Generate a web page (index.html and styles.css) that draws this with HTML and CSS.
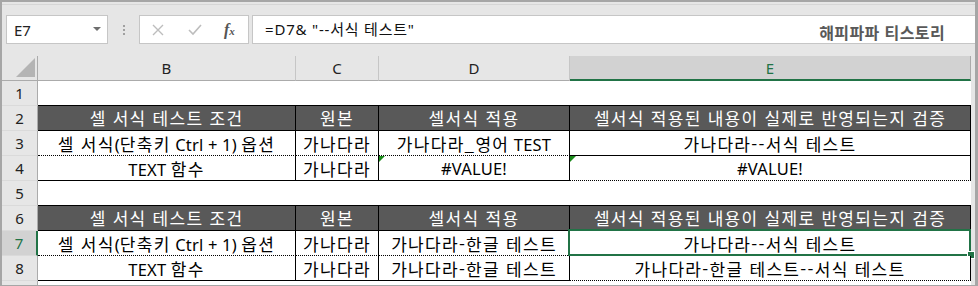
FILE: index.html
```html
<!DOCTYPE html>
<html lang="ko">
<head>
<meta charset="utf-8">
<link rel="stylesheet" href="styles.css">
</head>
<body>
<div class="app">
  <div class="fbar">
    <div class="namebox"><span class="nb-text">E7</span><span class="dd"></span></div>
    <div class="dots"><i></i><i></i><i></i></div>
    <div class="fxbox">
      <svg class="ic" width="12" height="12" viewBox="0 0 12 12"><path d="M1 1 L11 11 M11 1 L1 11" stroke="#bdbdbd" stroke-width="1.4" fill="none"/></svg>
      <svg class="ic" width="14" height="12" viewBox="0 0 14 12"><path d="M1 6 L5 10 L13 1" stroke="#bdbdbd" stroke-width="1.6" fill="none"/></svg>
      <span class="fx">f<small>x</small></span>
    </div>
    <div class="finput"><span class="ftext">=D7&amp; "--서식 테스트"</span><span class="wm">해피파파 티스토리</span></div>
  </div>
  <div class="sheet">
    <!-- header row -->
    <div class="corner"><span class="tri"></span></div>
    <div class="ch">B</div>
    <div class="ch">C</div>
    <div class="ch">D</div>
    <div class="ch sel">E</div>
    <div class="gap"></div>
    <!-- row 1 -->
    <div class="rh">1</div>
    <div class="c tb"></div><div class="c tb"></div><div class="c tb"></div><div class="c tb"></div><div class="gap"></div>
    <!-- row 2 -->
    <div class="rh">2</div>
    <div class="c hd">셀 서식 테스트 조건</div>
    <div class="c hd">원본</div>
    <div class="c hd">셀서식 적용</div>
    <div class="c hd">셀서식 적용된 내용이 실제로 반영되는지 검증</div>
    <div class="gap"></div>
    <!-- row 3 -->
    <div class="rh">3</div>
    <div class="c bd dot"><span>셀 서식<span class="en">(</span>단축키<span class="en"> Ctrl + 1) </span>옵션</span></div>
    <div class="c bd dot">가나다라</div>
    <div class="c bd dot"><span>가나다라_영어<span class="en"> TEST</span></span></div>
    <div class="c bd">가나다라--서식 테스트</div>
    <div class="gap"></div>
    <!-- row 4 -->
    <div class="rh">4</div>
    <div class="c bd"><span><span class="en">TEXT </span>함수</span></div>
    <div class="c bd">가나다라</div>
    <div class="c bd err"><span class="en">#VALUE!</span></div>
    <div class="c bd dot err"><span class="en">#VALUE!</span></div>
    <div class="gap"></div>
    <!-- row 5 -->
    <div class="rh">5</div>
    <div class="c tb"></div><div class="c tb"></div><div class="c tb"></div><div class="c tb"></div><div class="gap"></div>
    <!-- row 6 -->
    <div class="rh">6</div>
    <div class="c hd">셀 서식 테스트 조건</div>
    <div class="c hd">원본</div>
    <div class="c hd">셀서식 적용</div>
    <div class="c hd">셀서식 적용된 내용이 실제로 반영되는지 검증</div>
    <div class="gap"></div>
    <!-- row 7 -->
    <div class="rh sel">7</div>
    <div class="c bd dot"><span>셀 서식<span class="en">(</span>단축키<span class="en"> Ctrl + 1) </span>옵션</span></div>
    <div class="c bd dot">가나다라</div>
    <div class="c bd dot">가나다라-한글 테스트</div>
    <div class="c bd active">가나다라--서식 테스트<span class="selbox"></span><span class="handle"></span></div>
    <div class="gap"></div>
    <!-- row 8 -->
    <div class="rh">8</div>
    <div class="c bd"><span><span class="en">TEXT </span>함수</span></div>
    <div class="c bd">가나다라</div>
    <div class="c bd">가나다라-한글 테스트</div>
    <div class="c bd dot">가나다라-한글 테스트--서식 테스트</div>
    <div class="gap"></div>
    <!-- partial row 9 -->
    <div class="rh part"></div>
    <div class="c part"></div><div class="c part"></div><div class="c part"></div><div class="c part"></div><div class="gap part"></div>
  </div>
</div>
</body>
</html>
```

FILE: styles.css
```css
* { box-sizing: border-box; }
html, body { margin: 0; padding: 0; }
body { width: 978px; height: 286px; overflow: hidden; background: #a6a6a6; }

.app {
  width: 978px;
  height: 286px;
  border-top: 2px solid #a6a6a6;
  border-left: 2px solid #a6a6a6;
  border-right: 3px solid #a6a6a6;
  border-bottom: 3px solid #a6a6a6;
  background: #e6e6e6;
  font-family: "Noto Sans", "Noto Sans CJK KR", sans-serif;
}

/* formula bar */
.fbar {
  height: 52px;
  margin-top: 2px;
  border-top: 1px solid #d6d6d6;
  padding: 10px 0 0 4px;
  display: flex;
  align-items: flex-start;
}
.namebox {
  width: 102px;
  height: 29px;
  background: #fff;
  border: 1px solid #c6c6c6;
  display: flex;
  align-items: center;
  justify-content: space-between;
  padding: 0 6px 0 7px;
}
.nb-text { font-size: 15px; color: #222; }
.dd {
  width: 0; height: 0;
  border-left: 4px solid transparent;
  border-right: 4px solid transparent;
  border-top: 4px solid #6e6e6e;
  margin-top: -2px;
}
.dots {
  width: 31px;
  height: 29px;
  display: flex;
  flex-direction: column;
  align-items: center;
  justify-content: center;
  gap: 2px;
}
.dots i { display: block; width: 2px; height: 2px; background: #a0a0a0; }
.fxbox {
  width: 110px;
  height: 29px;
  background: #fff;
  border: 1px solid #c6c6c6;
  display: flex;
  align-items: center;
  padding-left: 12px;
}
.fxbox .ic:first-child { margin-right: 24px; margin-top: 1px; }
.fxbox .ic:nth-child(2) { margin-right: 22px; }
.fx {
  font-family: "Liberation Serif", serif;
  font-style: italic;
  font-size: 16px;
  color: #555;
  font-weight: bold;
}
.fx small { font-size: 11px; }
.finput {
  flex: 1;
  height: 29px;
  margin-left: 3px;
  background: #fff;
  border: 1px solid #c6c6c6;
  border-right: none;
  display: flex;
  align-items: center;
  justify-content: space-between;
  padding: 0 30px 0 12px;
}
.ftext { font-size: 15px; color: #111; margin-top: -3px; letter-spacing: 0.8px; }
.wm {
  font-family: "Noto Sans CJK KR", sans-serif;
  font-weight: bold;
  font-size: 16px;
  letter-spacing: 0.4px;
  color: #595959;
  margin-top: 4px;
}

/* sheet */
.sheet {
  display: grid;
  grid-template-columns: 36px 258px 83px 191px 401px 4px;
  grid-template-rows: repeat(9, 25px) 4px;
  background: #fff;
}
.corner {
  background: #e6e6e6;
  border-right: 1px solid #ababab;
  border-bottom: 1px solid #ababab;
  position: relative;
}
.tri {
  position: absolute;
  right: 2px;
  bottom: 3px;
  width: 0; height: 0;
  border-left: 19px solid transparent;
  border-bottom: 19px solid #b4b4b4;
}
.ch {
  background: #e6e6e6;
  border-right: 1px solid #c6c6c6;
  border-bottom: 1px solid #ababab;
  display: flex;
  align-items: center;
  justify-content: center;
  font-size: 15px;
  color: #222;
}
.ch.sel {
  background: #d2d2d2;
  color: #217346;
  border-right: 1px solid #ababab;
  border-bottom: 2px solid #217346;
}
.gap { background: #e6e6e6; }
.rh {
  background: #e6e6e6;
  border-right: 1px solid #ababab;
  border-bottom: 1px solid #dadada;
  display: flex;
  align-items: center;
  justify-content: center;
  font-size: 15px;
  color: #222;
}
.rh.sel {
  background: #d2d2d2;
  color: #217346;
  border-right: 2px solid #217346;
}
.rh.part { border-bottom: none; }

.c {
  background: #fff;
  display: flex;
  align-items: center;
  justify-content: center;
  font-family: "Noto Sans CJK KR", sans-serif;
  font-size: 17px;
  letter-spacing: 1.3px;
  color: #000;
  white-space: nowrap;
  position: relative;
}
.c .en {
  font-family: "Noto Sans", "Noto Sans CJK KR", sans-serif;
  font-size: 16.5px;
  letter-spacing: 0.2px;
}
.c.tb { border-bottom: 1px solid #000; }
.c.hd {
  background: #595959;
  color: #fff;
  border-right: 1px solid #000;
  border-bottom: 1px solid #000;
  padding-bottom: 2px;
}
.c.bd {
  border-right: 1px solid #000;
  border-bottom: 1px solid #000;
}
.c.bd.dot { border-bottom: 1px dotted #000; }
.c.err::before {
  content: "";
  position: absolute;
  left: 0; top: 0;
  width: 0; height: 0;
  border-top: 6px solid #1a8a1a;
  border-right: 6px solid transparent;
}
.selbox {
  position: absolute;
  left: -2px;
  top: -2px;
  width: 403px;
  height: 27px;
  border: 2px solid #217346;
}
.handle {
  position: absolute;
  right: -4px;
  bottom: -3px;
  width: 6px;
  height: 6px;
  background: #217346;
  border: 1px solid #fff;
  box-sizing: content-box;
  margin: -1px;
}
.part { background: #fff; }
.rh.part, .gap.part { background: #e6e6e6; }
```
